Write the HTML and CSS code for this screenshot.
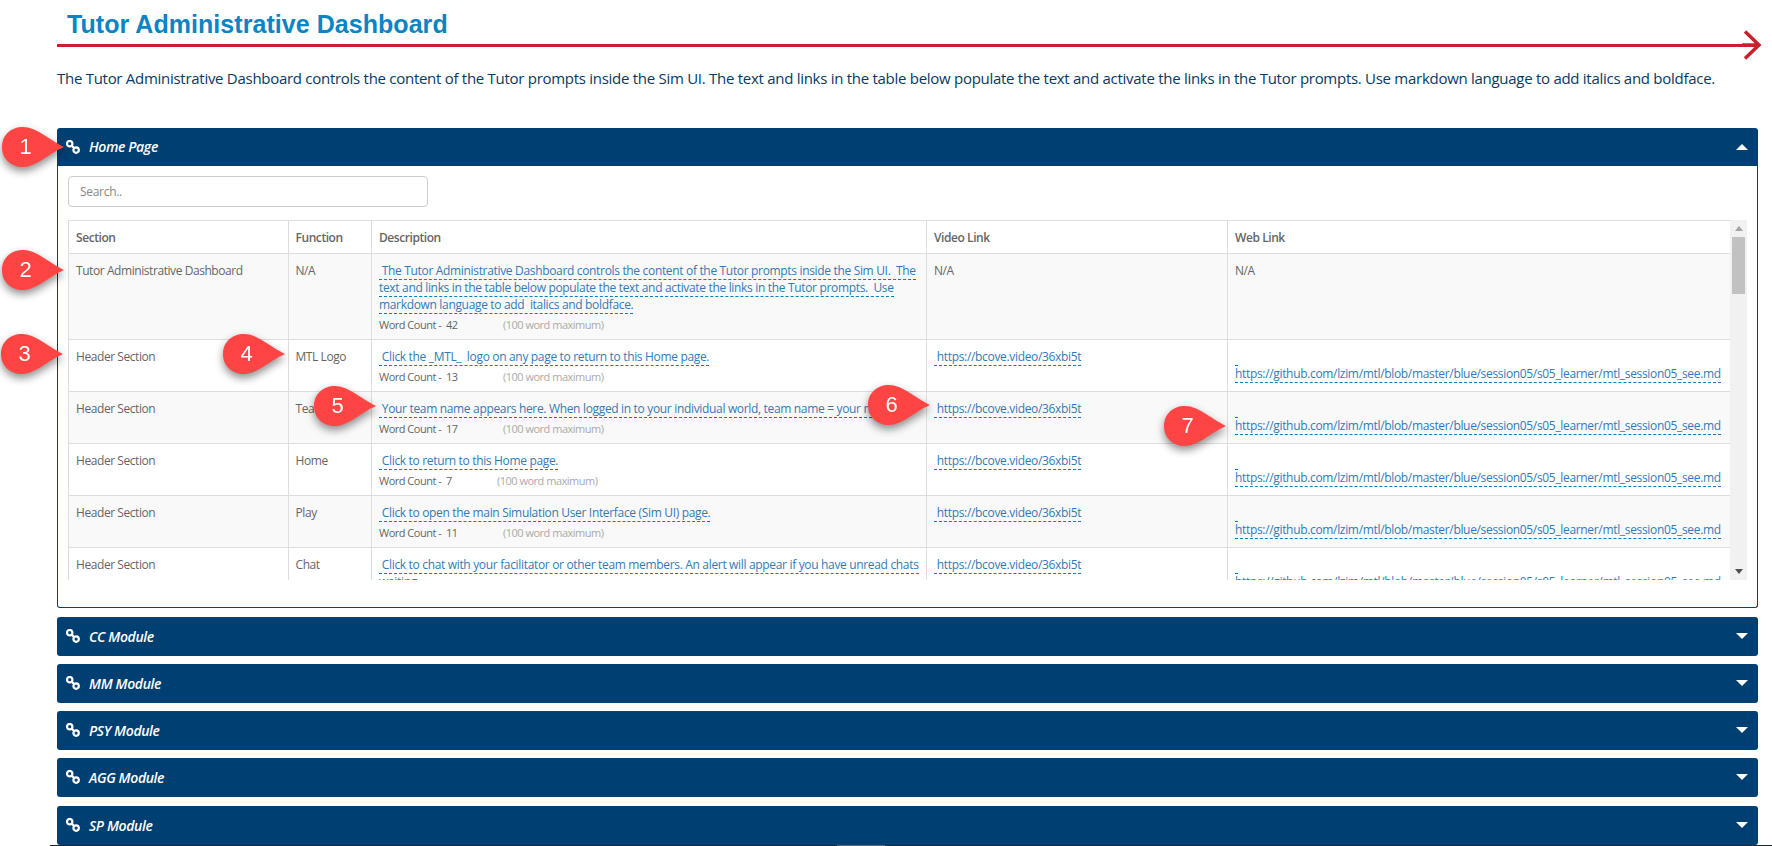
FILE: index.html
```html
<!DOCTYPE html>
<html lang="en">
<head>
<meta charset="utf-8"/>
<title>Tutor Administrative Dashboard</title>
<link rel="stylesheet" href="styles.css">
</head>
<body>
<svg width="0" height="0" class="defs">
  <symbol id="chain" viewBox="0 0 14 14">
    <circle cx="3.7" cy="3.7" r="2.7" fill="none" stroke="#fff" stroke-width="2.2"/>
    <circle cx="10.1" cy="10.1" r="2.7" fill="none" stroke="#fff" stroke-width="2.2"/>
    <path d="M5.5 5.5L8.3 8.3" stroke="#fff" stroke-width="2.2"/>
  </symbol>
  <symbol id="pin" viewBox="0 0 64 40">
    <path d="M0 20C0 8 9 0 21 0C34 0 46 12 62 20C46 27 34 40 21 40C9 40 0 32 0 20Z" fill="#ff4444"/>
  </symbol>
</svg>

<div class="title-block">
  <h1>Tutor Administrative Dashboard</h1>
  <svg class="arrow-head" width="20" height="34" viewBox="0 0 20 34"><path d="M0 17H17M3 3.5L17 17L3 30.5" fill="none" stroke="#c8202f" stroke-width="3.5"/></svg>
</div>
<p class="intro">The Tutor Administrative Dashboard controls the content of the Tutor prompts inside the Sim UI. The text and links in the table below populate the text and activate the links in the Tutor prompts. Use markdown language to add italics and boldface.</p>

<div class="accordion">
  <div class="panel-head open">
    <svg class="chain"><use href="#chain"/></svg>
    <span>Home Page</span>
    <i class="caret up"></i>
  </div>
  <div class="panel-body">
    <input class="search" type="text" placeholder="Search.."/>
    <div class="table-wrap">
      <div class="table-clip">
        <table>
          <colgroup>
            <col class="c1"/><col class="c2"/><col class="c3"/><col class="c4"/><col class="c5"/>
          </colgroup>
          <thead>
            <tr><th>Section</th><th>Function</th><th>Description</th><th>Video Link</th><th>Web Link</th></tr>
          </thead>
          <tbody>
            <tr class="odd">
              <td>Tutor Administrative Dashboard</td>
              <td>N/A</td>
              <td><a href="#">&nbsp;The Tutor Administrative Dashboard controls the content of the Tutor prompts inside the Sim UI.&nbsp; The text and links in the table below populate the text and activate the links in the Tutor prompts.&nbsp; Use markdown language to add&nbsp; italics and boldface.</a>
                <div class="count"><span class="wc">Word Count - &nbsp;42</span><span class="max">(100 word maximum)</span></div></td>
              <td>N/A</td>
              <td>N/A</td>
            </tr>
            <tr>
              <td>Header Section</td>
              <td>MTL Logo</td>
              <td><a href="#">&nbsp;Click the _MTL_&nbsp; logo on any page to return to this Home page.</a>
                <div class="count"><span class="wc">Word Count - &nbsp;13</span><span class="max">(100 word maximum)</span></div></td>
              <td><a href="#">&nbsp;https://bcove.video/36xbi5t</a></td>
              <td><a href="#">&nbsp;<br/>https://github.com/lzim/mtl/blob/master/blue/session05/s05_learner/mtl_session05_see.md</a></td>
            </tr>
            <tr class="odd">
              <td>Header Section</td>
              <td>Team</td>
              <td><a href="#">&nbsp;Your team name appears here. When logged in to your individual world, team name = your name.</a>
                <div class="count"><span class="wc">Word Count - &nbsp;17</span><span class="max">(100 word maximum)</span></div></td>
              <td><a href="#">&nbsp;https://bcove.video/36xbi5t</a></td>
              <td><a href="#">&nbsp;<br/>https://github.com/lzim/mtl/blob/master/blue/session05/s05_learner/mtl_session05_see.md</a></td>
            </tr>
            <tr>
              <td>Header Section</td>
              <td>Home</td>
              <td><a href="#">&nbsp;Click to return to this Home page.</a>
                <div class="count"><span class="wc short">Word Count - &nbsp;7</span><span class="max">(100 word maximum)</span></div></td>
              <td><a href="#">&nbsp;https://bcove.video/36xbi5t</a></td>
              <td><a href="#">&nbsp;<br/>https://github.com/lzim/mtl/blob/master/blue/session05/s05_learner/mtl_session05_see.md</a></td>
            </tr>
            <tr class="odd">
              <td>Header Section</td>
              <td>Play</td>
              <td><a href="#">&nbsp;Click to open the main Simulation User Interface (Sim UI) page.</a>
                <div class="count"><span class="wc">Word Count - &nbsp;11</span><span class="max">(100 word maximum)</span></div></td>
              <td><a href="#">&nbsp;https://bcove.video/36xbi5t</a></td>
              <td><a href="#">&nbsp;<br/>https://github.com/lzim/mtl/blob/master/blue/session05/s05_learner/mtl_session05_see.md</a></td>
            </tr>
            <tr>
              <td>Header Section</td>
              <td>Chat</td>
              <td><a href="#">&nbsp;Click to chat with your facilitator or other team members. An alert will appear if you have unread chats waiting.</a></td>
              <td><a href="#">&nbsp;https://bcove.video/36xbi5t</a></td>
              <td><a href="#">&nbsp;<br/>https://github.com/lzim/mtl/blob/master/blue/session05/s05_learner/mtl_session05_see.md</a></td>
            </tr>
          </tbody>
        </table>
      </div>
      <div class="scrollbar">
        <i class="sb-arrow up"></i>
        <div class="sb-track"><div class="sb-thumb"></div></div>
        <i class="sb-arrow down"></i>
      </div>
    </div>
  </div>

  <div class="panel-head"><svg class="chain"><use href="#chain"/></svg><span>CC Module</span><i class="caret"></i></div>
  <div class="panel-head"><svg class="chain"><use href="#chain"/></svg><span>MM Module</span><i class="caret"></i></div>
  <div class="panel-head"><svg class="chain"><use href="#chain"/></svg><span>PSY Module</span><i class="caret"></i></div>
  <div class="panel-head"><svg class="chain"><use href="#chain"/></svg><span>AGG Module</span><i class="caret"></i></div>
  <div class="panel-head last"><svg class="chain"><use href="#chain"/></svg><span>SP Module</span><i class="caret"></i></div>
</div>

<div class="pin p1"><svg><use href="#pin"/></svg><span>1</span></div>
<div class="pin p2"><svg><use href="#pin"/></svg><span>2</span></div>
<div class="pin p3"><svg><use href="#pin"/></svg><span>3</span></div>
<div class="pin p4"><svg><use href="#pin"/></svg><span>4</span></div>
<div class="pin p5"><svg><use href="#pin"/></svg><span>5</span></div>
<div class="pin p6"><svg><use href="#pin"/></svg><span>6</span></div>
<div class="pin p7"><svg><use href="#pin"/></svg><span>7</span></div>

<div class="window-edge"><div class="edge-tab"></div></div>
</body>
</html>
```

FILE: styles.css
```css
html, body {
    height: 846px;
    overflow: hidden;
}

body {
    margin: 0;
    padding: 0 14px 0 57px;
    position: relative;
    background: #fff;
    font-family: "Open Sans", sans-serif;
    box-sizing: border-box;
}

.defs {
    position: absolute;
}

.title-block {
    height: 47px;
    box-sizing: border-box;
    border-bottom: 3px solid #c8202f;
    position: relative;
}

h1 {
    margin: 0;
    padding: 10px 0 0 10px;
    font-family: "Liberation Sans", Arial, sans-serif;
    font-size: 25px;
    line-height: 28px;
    font-weight: bold;
    letter-spacing: 0.05px;
    color: #0b84c4;
}

.arrow-head {
    position: absolute;
    right: -4px;
    top: 28px;
}

.intro {
    margin: 21px 0 0;
    height: 60px;
    font-size: 15px;
    line-height: 20px;
    letter-spacing: -0.28px;
    color: #063a63;
    white-space: nowrap;
}

.accordion {
    display: flex;
    flex-direction: column;
}

.panel-head {
    height: 39px;
    margin-bottom: 8px;
    padding: 0 10px 1px 9px;
    box-sizing: border-box;
    display: flex;
    align-items: center;
    background: #003f72;
    color: #fff;
    border-radius: 3px;
    font-size: 14px;
    font-style: italic;
    font-weight: 600;
    letter-spacing: -0.38px;
}

.panel-head.open {
    height: 38px;
    margin-bottom: 0;
    border-radius: 3px 3px 0 0;
}

.panel-head.last {
    margin-top: 1px;
}

.chain {
    width: 14px;
    height: 14px;
    margin-right: 9px;
    flex: none;
}

.panel-head span {
    flex: 1;
}

.caret {
    width: 0;
    height: 0;
    border-left: 6px solid transparent;
    border-right: 6px solid transparent;
    border-top: 6px solid #fff;
}

.caret.up {
    border-top: 0;
    border-bottom: 6px solid #fff;
}

.panel-body {
    height: 442px;
    margin-bottom: 9px;
    padding: 10px 10px 0;
    box-sizing: border-box;
    border: 1px solid #003f72;
    border-top: 0;
    border-radius: 0 0 3px 3px;
}

.search {
    display: block;
    width: 360px;
    height: 31px;
    padding: 0 11px;
    box-sizing: border-box;
    border: 1px solid #ccc;
    border-radius: 4px;
    font-family: "Open Sans", sans-serif;
    font-size: 12px;
    letter-spacing: -0.3px;
}

.search::placeholder {
    color: #888;
}

.table-wrap {
    display: flex;
    margin-top: 13px;
    height: 360px;
}

.table-clip {
    width: 1662px;
    overflow: hidden;
}

table {
    width: 1662px;
    table-layout: fixed;
    border-collapse: collapse;
    font-size: 12px;
    line-height: 17px;
    letter-spacing: -0.43px;
    color: #666;
}

.c1 { width: 219.5px; }
.c2 { width: 83.5px; }
.c3 { width: 555px; }
.c4 { width: 301px; }
.c5 { width: 503px; }

th, td {
    border: 1px solid #ddd;
    padding: 8px 7px 6px;
    text-align: left;
    vertical-align: top;
}

th {
    font-weight: 600;
    padding-bottom: 7px;
}

tr.odd td {
    background: #f9f9f9;
}

td a {
    color: #337ab7;
    text-decoration: none;
    border-bottom: 1px dashed #0a7fc0;
    letter-spacing: -0.33px;
}

.count {
    display: flex;
    height: 17px;
    margin-top: 3px;
    font-size: 11px;
    letter-spacing: -0.5px;
    color: #666;
}

.wc {
    flex: none;
    width: 124px;
}

.wc.short {
    width: 118px;
}

.max {
    color: #aaa;
}

.scrollbar {
    width: 17px;
    background: #f1f1f1;
    display: flex;
    flex-direction: column;
    align-items: center;
}

.sb-arrow {
    width: 0;
    height: 0;
    border-left: 4px solid transparent;
    border-right: 4px solid transparent;
    flex: none;
}

.sb-arrow.up {
    margin-top: 6px;
    border-bottom: 5px solid #a3a3a3;
}

.sb-arrow.down {
    margin-bottom: 6px;
    border-top: 5px solid #505050;
}

.sb-track {
    flex: 1;
    width: 100%;
    padding: 6px 2px 0;
    box-sizing: border-box;
}

.sb-thumb {
    height: 57px;
    background: #c1c1c1;
}

.pin {
    position: absolute;
    width: 64px;
    height: 40px;
    filter: drop-shadow(0 4px 4px rgba(0, 0, 0, 0.45));
}

.pin svg {
    width: 64px;
    height: 40px;
    display: block;
}

.pin span {
    position: absolute;
    left: 0;
    top: 0;
    width: 47px;
    line-height: 40px;
    text-align: center;
    font-family: "Liberation Sans", Arial, sans-serif;
    font-size: 22px;
    color: #fff;
}

.p1 { left: 2px; top: 127px; }
.p2 { left: 2px; top: 250px; }
.p3 { left: 1px; top: 334px; }
.p4 { left: 223px; top: 334px; }
.p5 { left: 314px; top: 386px; }
.p6 { left: 868px; top: 385px; }
.p7 { left: 1164px; top: 406px; }

.window-edge {
    position: absolute;
    left: 50px;
    right: 0;
    bottom: 0;
    height: 1px;
    background: #1c2b2b;
}

.edge-tab {
    width: 48px;
    height: 1px;
    margin-left: 787px;
    background: #666;
}
```
